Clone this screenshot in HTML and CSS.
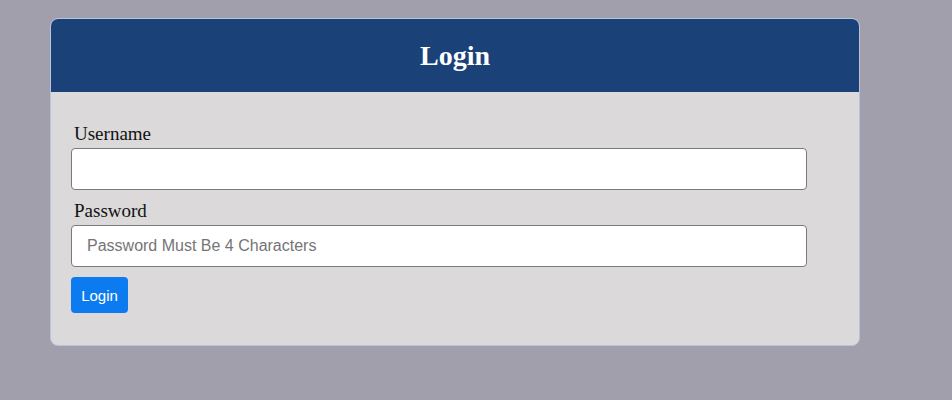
FILE: index.html
```html
<!DOCTYPE html>
<html>
<head>
<meta charset="utf-8">
<link rel="stylesheet" href="styles.css">
</head>
<body>
<div class="card">
  <div class="card-header"><h1 class="title">Login</h1></div>
  <form class="card-body">
    <label class="label" for="u">Username</label>
    <input class="input" id="u" type="text">
    <label class="label label-second" for="p">Password</label>
    <input class="input" id="p" type="password" placeholder="Password Must Be 4 Characters">
    <button class="btn" type="button">Login</button>
  </form>
</div>
</body>
</html>
```
FILE: styles.css
```css
html, body {
  margin: 0;
  padding: 0;
  background: #a19fac;
  height: 100%;
}
body {
  padding: 18px 0 0 50px;
  box-sizing: border-box;
  font-family: "Liberation Serif", serif;
}
.card {
  width: 810px;
  box-sizing: border-box;
  border: 1px solid #b9c3dc;
  border-radius: 8px;
  overflow: hidden;
  background: #dbd9da;
}
.card-header {
  height: 73px;
  background: #1b4179;
  display: flex;
  align-items: center;
  justify-content: center;
}
.title {
  margin: 0;
  color: #ffffff;
  font-family: "Liberation Serif", serif;
  font-weight: bold;
  font-size: 28px;
  line-height: 30px;
}
.card-body {
  display: flex;
  flex-direction: column;
  align-items: flex-start;
  padding: 31px 20px 32px 20px;
}
.label {
  font-size: 19px;
  line-height: 22px;
  color: #111;
  margin: 0 0 3px 3px;
}
.label-second {
  margin-top: 10px;
}
.input {
  width: 736px;
  height: 42px;
  box-sizing: border-box;
  border: 1px solid #7a7a7a;
  border-radius: 4px;
  background: #fff;
  padding: 0 15px;
  font-family: "Liberation Sans", Arial, sans-serif;
  font-size: 16px;
  color: #333;
  margin: 0;
}
.input::placeholder {
  color: #757575;
}
.btn {
  margin-top: 10px;
  width: 57px;
  height: 36px;
  border: none;
  border-radius: 4px;
  background: #0d7bf0;
  color: #fff;
  font-family: "Liberation Sans", Arial, sans-serif;
  font-size: 15px;
  padding: 0;
}
```
